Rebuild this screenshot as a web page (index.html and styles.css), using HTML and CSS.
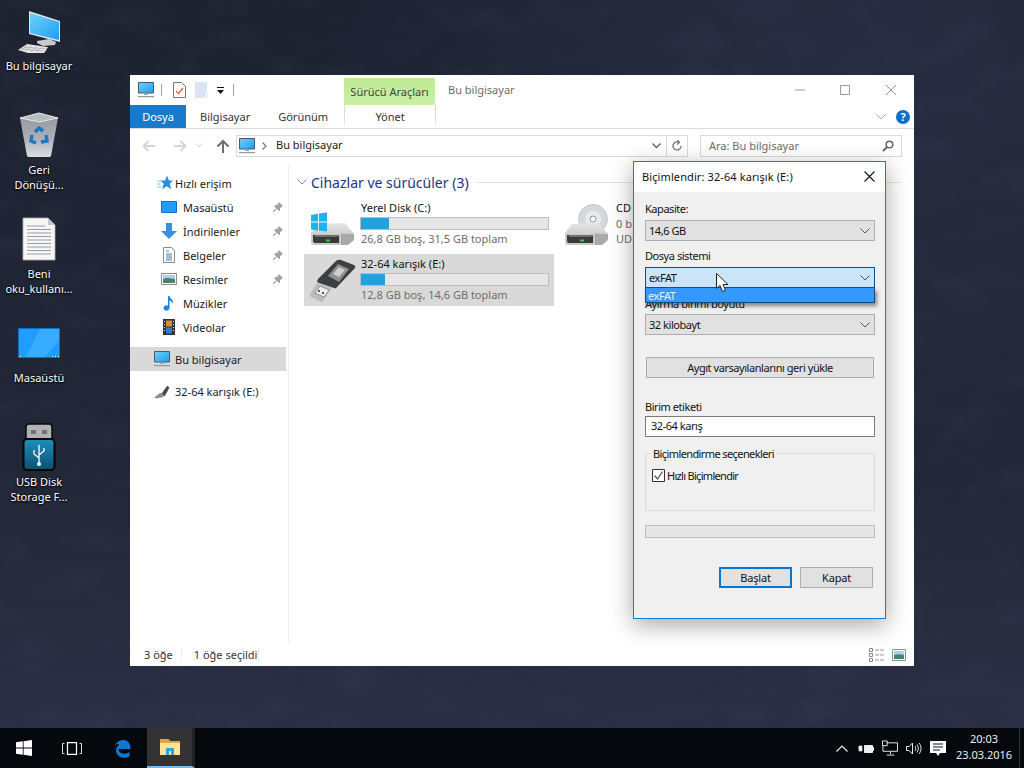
FILE: index.html
```html
<!DOCTYPE html>
<html lang="tr">
<head>
    <meta charset="UTF-8">
    <title>Bu bilgisayar</title>
    <link rel="stylesheet" href="styles.css">
</head>
<body>
    <!-- wallpaper mottling -->
    <svg class="wallpaper" width="1024" height="768">
        <filter id="mottle">
            <feTurbulence type="fractalNoise" baseFrequency=".015 .03" numOctaves="5" seed="7"/>
            <feColorMatrix values="0 0 0 0 .5  0 0 0 0 .55  0 0 0 0 .7  1.600 0 0 0 -.72"/>
        </filter>
        <rect width="1024" height="768" filter="url(#mottle)" opacity=".05"/>
    </svg>

    <!-- shared icons -->
    <svg class="sprite" width="0" height="0">
        <defs>
            <linearGradient id="screenBlue" x1="0" y1="0" x2="1" y2="1">
                <stop offset="0" stop-color="#6fd0fb"/><stop offset="1" stop-color="#1f9fee"/>
            </linearGradient>
            <linearGradient id="diskTop" x1="0" y1="0" x2="0" y2="1">
                <stop offset="0" stop-color="#e6e6e6"/><stop offset="1" stop-color="#cfcfcf"/>
            </linearGradient>
            <linearGradient id="binBody" x1="0" y1="0" x2="0" y2="1">
                <stop offset="0" stop-color="#8f959c"/><stop offset=".6" stop-color="#aeb2b8"/><stop offset="1" stop-color="#dcdee0"/>
            </linearGradient>
            <linearGradient id="usbBody" x1="0" y1="0" x2="0" y2="1">
                <stop offset="0" stop-color="#1d90bb"/><stop offset="1" stop-color="#0c4f70"/>
            </linearGradient>
            <symbol id="i-monitor" viewBox="0 0 16 16">
                <path d="M.5.5h15v10.500H.5z" fill="url(#screenBlue)" stroke="#4b5a66"/>
                <path d="M6 11h4v2H6z" fill="#9aa3aa"/>
                <path d="M0 14h16v1.200H0z" fill="#8d99a3"/>
            </symbol>
            <symbol id="i-pin" viewBox="0 0 12 12">
                <path d="M7 1l4 4-1.200.6L8 7.500 8 9.500 6.800 10 2.300 5.400l.6-1.100 2-.2L6.600 2z" fill="#a3a3a3"/>
                <path d="M4 8L1.200 10.800" stroke="#a3a3a3" stroke-width="1.200"/>
            </symbol>
            <symbol id="i-disk" viewBox="0 0 48 48">
                <path d="M9 24l27-1 9 11-43-1z" fill="url(#diskTop)"/>
                <path d="M2 33l30 .5V45H5q-3 0-3-3z" fill="#c9c9c9"/>
                <path d="M32 33.500L45 34v5q0 1-1 2l-5 4h-7z" fill="#a9a9a9"/>
                <path d="M4 35l26 .5V43H6q-2 0-2-2z" fill="#3a3a3a"/>
                <path d="M6 35h22v2H6z" fill="#707070"/>
                <path d="M17 39.500h4v2h-4z" fill="#35d04a"/>
            </symbol>
            <symbol id="i-usb" viewBox="0 0 14 14">
                <path d="M6.500 9.500L11.500 2.500l2 1.500-4 7.500z" fill="#4a4a4a"/>
                <path d="M5.500 8.500l3.500 2.500-1.500 1.500-6 1-1-1z" fill="#8c8c8c"/>
            </symbol>
        </defs>
    </svg>

    <!-- desktop icons -->
    <ul class="desktop-icons">
        <li class="desk-item">
            <svg class="desk-icon" viewBox="0 0 48 48">
                <path d="M14 3l31 10v21L14 26z" fill="#dfe6ec"/>
                <path d="M15 5l29 9v18L15 25z" fill="url(#screenBlue)"/>
                <path d="M22 33l12-2 7 3-1 3-12 1-6-3z" fill="#c7c9cb"/>
                <path d="M3 42l9-6 20 3 1 0-3 5-1 1H13z" fill="#e8e8e8"/>
                <path d="M6 42l7-4.500M10 43l7-5M15 44l7-5M21 44l6-5M6 41l23 2M9 39l23 2" stroke="#9c9c9c" stroke-width=".6"/>
            </svg>
            <span>Bu bilgisayar</span>
        </li>
        <li class="desk-item">
            <svg class="desk-icon" viewBox="0 0 48 48">
                <path d="M5 6l19-5 19 5-7 38a4 4 0 0 1-2 1H14a4 4 0 0 1-2-1z" fill="url(#binBody)"/>
                <path d="M5 6l19-5 19 5-19 4z" fill="#b8bcc0" stroke="#e4e6e8" stroke-width="1"/>
                <path d="M20 20l4-4 4 3M31 23l1 6-6 1M21 31l-5-2 1-6" fill="none" stroke="#1b78c8" stroke-width="3.500"/>
            </svg>
            <span>Geri<br>Dönüşü...</span>
        </li>
        <li class="desk-item">
            <svg class="desk-icon" viewBox="0 0 48 48">
                <path d="M8 2h25l7 7v35H8z" fill="#f6f6f6" stroke="#a9acb0" stroke-width=".8"/>
                <path d="M33 2v7h7z" fill="#c4c7ca"/>
                <path d="M12 10h18M12 13.500h24M12 17h24M12 20.500h24M12 24h24M12 27.500h24M12 31h24M12 34.500h24M12 38h24" stroke="#9b9ea2" stroke-width="1"/>
            </svg>
            <span>Beni<br>oku_kullanı...</span>
        </li>
        <li class="desk-item">
            <svg class="desk-icon" viewBox="0 0 48 48">
                <path d="M3.500 8.500h41v29h-41z" fill="#1f9eff" stroke="#0f6fc6"/>
                <path d="M25 9h19v12L30 37H11z" fill="#38adff"/>
                <path d="M5 36h1v1H5zM37 36h1v1h-1zM40 36h1v1h-1zM43 36h1v1h-1z" fill="#fff"/>
            </svg>
            <span>Masaüstü</span>
        </li>
        <li class="desk-item">
            <svg class="desk-icon" viewBox="0 0 48 48">
                <path d="M11 3a3 3 0 0 1 3-3h20a3 3 0 0 1 3 3v15H11z" fill="#b0b2b3" stroke="#0a0a0a" stroke-width="1.500"/>
                <path d="M16 6h5v4h-5zM27 6h5v4h-5z" fill="#6f7172"/>
                <rect x="8.500" y="15" width="31" height="31" rx="3.500" fill="url(#usbBody)" stroke="#050505" stroke-width="2"/>
                <path d="M24 21v18M24 34l-5-4v-4M24 31l5-4v-3" fill="none" stroke="#fff" stroke-width="1.300"/>
                <circle cx="24" cy="40" r="2" fill="#fff"/>
            </svg>
            <span>USB Disk<br>Storage F...</span>
        </li>
    </ul>

    <!-- explorer window -->
    <section class="explorer">
        <header class="titlebar">
            <div class="qat">
                <svg class="ico16"><use href="#i-monitor"/></svg>
                <i class="qat-sep"></i>
                <svg class="qat-doc" viewBox="0 0 13 16">
                    <path d="M.5.500h8l4 4v11H.5z" fill="#fff" stroke="#777"/>
                    <path d="M3 9l2.500 2.500L10 6" fill="none" stroke="#e8622a" stroke-width="1.300"/>
                </svg>
                <svg class="qat-doc" viewBox="0 0 13 16">
                    <path d="M0 0h12v16H0z" fill="#dbe4f2"/>
                    <path d="M10 11h3v5h-3z" fill="#eef2f8"/>
                </svg>
                <svg class="qat-drop" viewBox="0 0 7 7"><path d="M0 0h7v1H0zM0 3h7L3.500 7z" fill="#111"/></svg>
                <i class="qat-sep"></i>
            </div>
            <div class="tool-tab">Sürücü Araçları</div>
            <div class="win-title">Bu bilgisayar</div>
            <div class="win-controls">
                <svg viewBox="0 0 10 10"><path d="M0 5h10" stroke="#999"/></svg>
                <svg viewBox="0 0 10 10"><path d="M.5.500h9v9h-9z" fill="none" stroke="#999"/></svg>
                <svg class="win-close" viewBox="0 0 10 10"><path d="M0 0l10 10M10 0L0 10" stroke="#999"/></svg>
            </div>
        </header>

        <nav class="ribbon">
            <a class="tab tab-file">Dosya</a>
            <a class="tab tab-computer">Bilgisayar</a>
            <a class="tab tab-view">Görünüm</a>
            <a class="tab tab-manage">Yönet</a>
            <svg class="ribbon-chev" viewBox="0 0 10 6"><path d="M.5.500L5 5 9.500.5" fill="none" stroke="#a8a8a8"/></svg>
            <span class="help">?</span>
        </nav>

        <div class="addressrow">
            <svg class="nav-btn" viewBox="0 0 14 12"><path d="M13 6H2M6.500 1L1.500 6l5 5" fill="none" stroke="#d4d4d4" stroke-width="1.800"/></svg>
            <svg class="nav-btn" viewBox="0 0 14 12"><path d="M1 6h11M7.500 1l5 5-5 5" fill="none" stroke="#d4d4d4" stroke-width="1.800"/></svg>
            <svg class="nav-down" viewBox="0 0 8 5"><path d="M.5.500L4 4 7.500.5" fill="none" stroke="#d4d4d4"/></svg>
            <svg class="nav-up" viewBox="0 0 14 14"><path d="M7 14V2M1.500 7.500L7 2l5.500 5.500" fill="none" stroke="#6e6e6e" stroke-width="2"/></svg>
            <div class="addressbar">
                <svg class="ico16"><use href="#i-monitor"/></svg>
                <svg class="crumb" viewBox="0 0 5 8"><path d="M.5.500L4 4 .5 7.500" fill="none" stroke="#777" stroke-width="1.200"/></svg>
                <span class="crumb-text">Bu bilgisayar</span>
                <svg class="addr-chev" viewBox="0 0 9 6"><path d="M.5.500L4.500 4.500 8.500.5" fill="none" stroke="#666" stroke-width="1.400"/></svg>
                <span class="addr-refresh">
                    <svg viewBox="0 0 12 12"><path d="M10 6a4 4 0 1 1-2-3.500M6.500 0l2 2.500L6 4.500" fill="none" stroke="#777" stroke-width="1.300"/></svg>
                </span>
            </div>
            <div class="searchbox">
                <span>Ara: Bu bilgisayar</span>
                <svg viewBox="0 0 12 12"><circle cx="7.500" cy="4.500" r="3.300" fill="none" stroke="#666" stroke-width="1.500"/><path d="M5 7l-4 4" stroke="#666" stroke-width="2"/></svg>
            </div>
        </div>

        <div class="main">
            <aside class="sidebar">
                <div class="side-row side-head">
                    <svg class="side-icon" viewBox="0 0 16 16"><path d="M10 .5l2 5h4l-3.200 3.200 1.400 5.500-4.500-3-4.500 3 1.500-5.500L3.500 5.500h4.500z" fill="#2a8fe0"/><path d="M0 6h4M0 9h3M0 12h4" stroke="#8cc4ee"/></svg>
                    <span>Hızlı erişim</span>
                </div>
                <div class="side-row side-sub">
                    <svg class="side-icon" viewBox="0 0 16 16"><path d="M.5 2.500h15v11H.5z" fill="#1f9eff" stroke="#0f6fc6"/></svg>
                    <span>Masaüstü</span>
                    <svg class="pin"><use href="#i-pin"/></svg>
                </div>
                <div class="side-row side-sub">
                    <svg class="side-icon" viewBox="0 0 16 16"><path d="M5 0h6v8h5l-8 8-8-8h5z" fill="#3a8ede"/></svg>
                    <span>İndirilenler</span>
                    <svg class="pin"><use href="#i-pin"/></svg>
                </div>
                <div class="side-row side-sub">
                    <svg class="side-icon" viewBox="0 0 16 16"><path d="M2.500.5h8l3 3v12h-11z" fill="#fff" stroke="#888"/><path d="M5 4h3M5 7h6M5 9h6M5 11h6M5 13h6" stroke="#3f82b8"/></svg>
                    <span>Belgeler</span>
                    <svg class="pin"><use href="#i-pin"/></svg>
                </div>
                <div class="side-row side-sub">
                    <svg class="side-icon" viewBox="0 0 16 16"><path d="M.5 2.500h15v11H.5z" fill="#fff" stroke="#8a8a8a"/><path d="M2 4h12v4H2z" fill="#a9d3ea"/><path d="M2 8c4-2 8 0 12 0v4H2z" fill="#4d7f6a"/></svg>
                    <span>Resimler</span>
                    <svg class="pin"><use href="#i-pin"/></svg>
                </div>
                <div class="side-row side-sub">
                    <svg class="side-icon" viewBox="0 0 16 16"><path d="M7 1h1.500c.5 3 4.500 3.500 3.500 8-.5-2-2-3-3.500-3.500V13a3 2.700 0 1 1-1.500-2.300z" fill="#1c86e0"/></svg>
                    <span>Müzikler</span>
                </div>
                <div class="side-row side-sub">
                    <svg class="side-icon" viewBox="0 0 16 16"><path d="M2 0h12v16H2z" fill="#333"/><path d="M5 1.500h6V7.500H5z" fill="#d98c2b"/><path d="M5 8.500h6v6H5z" fill="#2f7fd0"/><path d="M3 2h1v1H3zM3 5h1v1H3zM3 8h1v1H3zM3 11h1v1H3zM12 2h1v1h-1zM12 5h1v1h-1zM12 8h1v1h-1zM12 11h1v1h-1z" fill="#ddd"/></svg>
                    <span>Videolar</span>
                </div>
                <div class="side-row side-head side-pc">
                    <svg class="side-icon"><use href="#i-monitor"/></svg>
                    <span>Bu bilgisayar</span>
                </div>
                <div class="side-row side-head side-drive">
                    <svg class="side-icon"><use href="#i-usb"/></svg>
                    <span>32-64 karışık (E:)</span>
                </div>
            </aside>

            <div class="content">
                <div class="group-head">
                    <svg viewBox="0 0 10 6"><path d="M.5.500L5 5 9.500.5" fill="none" stroke="#8a8a8a"/></svg>
                    <span>Cihazlar ve sürücüler (3)</span>
                    <i></i>
                </div>
                <div class="drives">
                    <div class="drive">
                        <svg class="drive-icon" viewBox="0 0 48 48">
                            <use href="#i-disk"/>
                            <path d="M2 15l7-1.200V21.500H2zM10 13.600L18 12.500v9h-8zM2 22.500h7v8l-7-1zM10 22.500h8v9l-8-1z" fill="#19b5f1"/>
                        </svg>
                        <div class="drive-info">
                            <div class="drive-name">Yerel Disk (C:)</div>
                            <div class="bar"><div class="bar-fill" style="width:15%"></div></div>
                            <div class="drive-sub">26,8 GB boş, 31,5 GB toplam</div>
                        </div>
                    </div>
                    <div class="drive drive-optical">
                        <svg class="drive-icon" viewBox="0 0 48 48">
                            <circle cx="28" cy="19" r="14.500" fill="#d5d7da" stroke="#b0b2b6" stroke-width=".6"/>
                            <circle cx="28" cy="19" r="8" fill="#e8eaec"/>
                            <circle cx="28" cy="19" r="3" fill="#fff" stroke="#9a9a9e"/>
                            <use href="#i-disk" x="-2"/>
                        </svg>
                        <div class="drive-info">
                            <div class="drive-name">CD</div>
                            <div class="drive-cd">0 b</div>
                            <div class="drive-sub">UDF</div>
                        </div>
                    </div>
                    <div class="drive drive-selected">
                        <svg class="drive-icon" viewBox="0 0 48 48">
                            <path d="M8 27L1 38q-1 2 1 3l10 5q1 .5 2-1l9-13z" fill="#bdbdbd"/>
                            <path d="M6 37l5-7 9 4-5 7z" fill="#eee" stroke="#666" stroke-width=".6"/>
                            <path d="M9 34h2v2H9zM13 36h2v2h-2z" fill="#555"/>
                            <path d="M27 5q2-2 5-1l13 5q2 1 1 3L28 31q-1 2-3 1L10 27q-3-1-1-4z" fill="#3d3e40"/>
                            <path d="M19 20L29 8l11 5-10 13z" fill="#8f9091"/>
                            <path d="M24 18l6-7 6 3-6 7z" fill="#cfcfcf"/>
                        </svg>
                        <div class="drive-info">
                            <div class="drive-name">32-64 karışık (E:)</div>
                            <div class="bar"><div class="bar-fill" style="width:13%"></div></div>
                            <div class="drive-sub">12,8 GB boş, 14,6 GB toplam</div>
                        </div>
                    </div>
                </div>
            </div>
        </div>

        <footer class="statusbar">
            <span class="status-count">3 öğe</span>
            <i class="status-sep"></i>
            <span>1 öğe seçildi</span>
            <i class="status-sep status-sep-last"></i>
            <svg class="view-details" viewBox="0 0 16 14"><path d="M.5.500h3v3h-3zM.5 5.500h3v3h-3zM.5 10.500h3v3h-3z" fill="none" stroke="#888"/><path d="M6 2h10M6 7h10M6 12h10" stroke="#999" stroke-dasharray="4 1"/></svg>
            <svg class="view-tiles" viewBox="0 0 14 12"><path d="M.5.500h13v11H.5z" fill="#fff" stroke="#7f93a8"/><path d="M2 2h10v4H2z" fill="#a9d3ea"/><path d="M2 6c3-1 7-1 10 0v4H2z" fill="#4d7f6a"/></svg>
        </footer>
    </section>

    <!-- format dialog -->
    <section class="dialog">
        <header class="dialog-title">
            <span>Biçimlendir: 32-64 karışık (E:)</span>
            <svg viewBox="0 0 11 11"><path d="M.5.500l10 10M10.500.5l-10 10" stroke="#111" stroke-width="1.100"/></svg>
        </header>
        <div class="dialog-body">
            <label class="field-label">Kapasite:</label>
            <div class="combo">
                <span>14,6 GB</span>
                <svg viewBox="0 0 10 6"><path d="M.5.500L5 5 9.500.5" fill="none" stroke="#555"/></svg>
            </div>
            <label class="field-label">Dosya sistemi</label>
            <div class="combo combo-open">
                <span>exFAT</span>
                <svg viewBox="0 0 10 6"><path d="M.5.500L5 5 9.500.5" fill="none" stroke="#555"/></svg>
                <div class="combo-list">exFAT</div>
            </div>
            <label class="field-label label-tight">Ayırma birimi boyutu</label>
            <div class="combo">
                <span>32 kilobayt</span>
                <svg viewBox="0 0 10 6"><path d="M.5.500L5 5 9.500.5" fill="none" stroke="#555"/></svg>
            </div>
            <button class="btn btn-wide">Aygıt varsayılanlarını geri yükle</button>
            <label class="field-label label-volume">Birim etiketi</label>
            <div class="textbox">32-64 karış</div>
            <fieldset class="options">
                <legend>Biçimlendirme seçenekleri</legend>
                <div class="check-row">
                    <svg class="check" viewBox="0 0 13 13"><path d="M.5.500h12v12H.5z" fill="#fff" stroke="#333"/><path d="M2.500 6.500l3 3.500 5-7.500" fill="none" stroke="#555" stroke-width="1.300"/></svg>
                    <span>Hızlı Biçimlendir</span>
                </div>
            </fieldset>
            <div class="progress"></div>
            <div class="dialog-actions">
                <button class="btn btn-primary">Başlat</button>
                <button class="btn">Kapat</button>
            </div>
        </div>
    </section>

    <svg class="cursor" viewBox="0 0 13 19"><path d="M.5.500v15l3.500-3 2.500 6 3-1.200-2.500-5.800h5z" fill="#fff" stroke="#222"/></svg>

    <!-- taskbar -->
    <footer class="taskbar">
        <div class="task-btn task-start">
            <svg viewBox="0 0 16 16"><path d="M0 2.300L6.800 1.300V7.600H0zM7.600 1.200L16 0V7.600H7.600zM0 8.400H6.800V14.700L0 13.700zM7.600 8.400H16V16L7.600 14.800z" fill="#fff"/></svg>
        </div>
        <div class="task-btn task-view">
            <svg viewBox="0 0 20 13"><path d="M5.500.7h9v11.600h-9z" fill="none" stroke="#fff" stroke-width="1.200"/><path d="M2.500 1.500H.5v10h2M17.500 1.500h2v10h-2" fill="none" stroke="#ddd"/></svg>
        </div>
        <div class="task-btn task-edge">
            <svg viewBox="0 0 20 19"><path d="M2 10C3 4 7 1 11 1c5 0 8 4 7.500 9H6.500c0 5 7 6 11 3v4.500c-6 3-14 .5-13.500-6.500 0-2 1-4 3-5C5 3.500 3 6 2 10z" fill="#0f78d4"/><path d="M7 8h7c0-4-6-4-7 0z" fill="#0f78d4"/></svg>
        </div>
        <div class="task-btn task-explorer">
            <svg viewBox="0 0 22 18"><path d="M1 1h8l2 2h10v14H1z" fill="#f7d774"/><path d="M1 5h20v12H1z" fill="#fce49a"/><path d="M1 1h8l2 2h10v2H1z" fill="#d9a93a"/><path d="M7 17v-6a1 1 0 0 1 1-1h6a1 1 0 0 1 1 1v6h-3v-4h-2v4z" fill="#23a8e0"/></svg>
        </div>
        <div class="tray">
            <svg class="tray-chev" viewBox="0 0 12 7"><path d="M.5 6.500L6 1l5.500 5.500" fill="none" stroke="#eee" stroke-width="1.200"/></svg>
            <svg class="tray-power" viewBox="0 0 16 11"><path d="M6.500 2.500h8v7h-8z" fill="#eee" stroke="#eee"/><path d="M15 4.500h1v3h-1zM0 5h3M1 3v5h3V3z" fill="#eee" stroke="#eee" stroke-width=".7"/></svg>
            <svg class="tray-net" viewBox="0 0 17 16"><path d="M5 2.500h11.500v9H1" fill="none" stroke="#eee"/><path d="M.5.500h5v5h-5zM1 5.500v6M9 11.500v3M5 15.500h8" fill="none" stroke="#eee"/></svg>
            <svg class="tray-sound" viewBox="0 0 16 13"><path d="M.5 4.500h2.500L6.500 1v11L3 8.500H.5z" fill="none" stroke="#eee"/><path d="M9 4c1 1.500 1 3.500 0 5M11 2.500c1.800 2.500 1.800 5.500 0 8M13 1c2.700 3.500 2.700 7.500 0 11" fill="none" stroke="#eee"/></svg>
            <svg class="tray-note" viewBox="0 0 16 15"><path d="M0 0h16v12h-6l-2 3-2-3H0z" fill="#fff"/><path d="M3 3h10M3 6h10M3 9h7" stroke="#10141a" stroke-width="1.100"/></svg>
            <div class="clock"><span>20:03</span><span>23.03.2016</span></div>
            <i class="show-desktop"></i>
        </div>
    </footer>
</body>
</html>
```
FILE: styles.css
```css
/* Base */
html, body {
    margin: 0;
    height: 768px;
    overflow: hidden;
}
body {
    position: relative;
    font-family: "Noto Sans", "Open Sans", sans-serif;
    font-size: 11px;
    color: #1a1a1a;
    background-color: #212636;
    background-image:
        radial-gradient(ellipse at 85% 10%, #272c40 0, transparent 45%),
        linear-gradient(180deg, #1e2332 0, #222737 60%, #2b3045 100%);
}
.sprite, .wallpaper {
    position: absolute;
    left: 0;
    top: 0;
}
svg {
    display: block;
    flex: none;
}
i {
    display: block;
}

/* Desktop icons */
.desktop-icons {
    position: absolute;
    left: 1px;
    top: 6px;
    width: 76px;
    margin: 0;
    padding: 0;
    list-style: none;
}
.desk-item {
    height: 104px;
    box-sizing: border-box;
    padding-top: 2px;
    display: flex;
    flex-direction: column;
    align-items: center;
    color: #fff;
    text-align: center;
    line-height: 15px;
    text-shadow: 0 1px 2px #000, 0 0 2px #000;
}
.desk-icon {
    width: 48px;
    height: 48px;
    margin-bottom: 2px;
    overflow: visible;
}

/* Explorer window */
.explorer {
    position: absolute;
    left: 130px;
    top: 75px;
    width: 784px;
    height: 591px;
    background: #fff;
    display: flex;
    flex-direction: column;
}
.titlebar {
    height: 30px;
    display: flex;
}
.qat {
    width: 214px;
    padding-left: 8px;
    box-sizing: border-box;
    display: flex;
    align-items: center;
}
.ico16 {
    width: 16px;
    height: 16px;
}
.qat-sep {
    width: 1px;
    height: 12px;
    background: #a0a0a0;
    margin: 0 11px 0 7px;
}
.qat-doc {
    width: 13px;
    height: 16px;
    margin-right: 9px;
}
.qat-drop {
    width: 7px;
    height: 7px;
    margin-right: 2px;
}
.tool-tab {
    margin-top: 3px;
    width: 91px;
    background: linear-gradient(180deg, #bdea92, #c9efa5);
    text-align: center;
    line-height: 27px;
    color: #444;
}
.win-title {
    margin-left: 13px;
    line-height: 30px;
    color: #6d6d6d;
}
.win-controls {
    margin-left: auto;
    display: flex;
    align-items: center;
    gap: 35px;
    padding-right: 18px;
}
.win-controls svg {
    width: 10px;
    height: 10px;
}
.win-controls .win-close {
    margin-left: 1px;
}
.ribbon {
    height: 23px;
    border-bottom: 1px solid #dadbdc;
    display: flex;
    align-items: center;
}
.tab {
    line-height: 23px;
    color: #333;
}
.tab-file {
    width: 56px;
    text-align: center;
    background: #1979ca;
    color: #fff;
}
.tab-computer {
    margin-left: 14px;
}
.tab-view {
    margin-left: 28px;
}
.tab-manage {
    margin-left: 16px;
    width: 92px;
    height: 23px;
    box-sizing: border-box;
    padding-top: 3px;
    text-align: center;
    line-height: 17px;
    border-style: solid;
    border-width: 0 1px;
    border-image: linear-gradient(180deg, #d8d9da 60%, transparent) 1;
}
.ribbon-chev {
    width: 10px;
    height: 6px;
    margin-left: auto;
}
.help {
    width: 14px;
    height: 14px;
    margin: 0 4px 0 10px;
    border-radius: 50%;
    background: #0a6ec4;
    color: #fff;
    font-weight: bold;
    font-size: 11px;
    line-height: 14px;
    text-align: center;
}
.addressrow {
    height: 36px;
    box-sizing: border-box;
    display: flex;
    align-items: center;
    padding: 5px 12px 8px;
}
.nav-btn {
    width: 14px;
    height: 12px;
    margin-right: 17px;
}
.nav-down {
    width: 8px;
    height: 5px;
    margin: 0 13px 0 -9px;
}
.nav-up {
    width: 14px;
    height: 14px;
    margin-right: 6px;
}
.addressbar {
    width: 452px;
    height: 22px;
    box-sizing: border-box;
    border: 1px solid #d9d9d9;
    display: flex;
    align-items: center;
    padding-left: 2px;
}
.crumb {
    width: 5px;
    height: 8px;
    margin: 0 9px 0 7px;
}
.crumb-text {
    margin-bottom: 2px;
}
.addr-chev {
    width: 9px;
    height: 6px;
    margin-left: auto;
    margin-right: 5px;
}
.addr-refresh {
    width: 20px;
    height: 20px;
    border-left: 1px solid #d9d9d9;
    display: flex;
    align-items: center;
    justify-content: center;
}
.addr-refresh svg {
    width: 12px;
    height: 12px;
}
.searchbox {
    width: 202px;
    height: 22px;
    box-sizing: border-box;
    margin-left: auto;
    border: 1px solid #d9d9d9;
    display: flex;
    align-items: center;
    justify-content: space-between;
    padding: 0 7px 0 8px;
    color: #6d6d6d;
}
.searchbox svg {
    width: 12px;
    height: 12px;
}

/* Main area */
.main {
    flex: 1;
    min-height: 0;
    display: flex;
}
.sidebar {
    width: 156px;
    padding: 6px 2px 0 0;
    border-right: 1px solid #f0f0f0;
}
.side-row {
    height: 24px;
    display: flex;
    align-items: center;
    color: #1a1a1a;
}
.side-icon {
    width: 16px;
    height: 16px;
}
.side-head {
    padding-left: 27px;
}
.side-head span {
    margin-left: 2px;
}
.side-sub {
    padding-left: 31px;
}
.side-sub span {
    margin-left: 6px;
}
.pin {
    width: 12px;
    height: 12px;
    margin-left: auto;
    margin-right: 2px;
}
.side-pc {
    margin-top: 8px;
    background: #d9d9d9;
    padding-left: 24px;
}
.side-pc span, .side-drive span {
    margin-left: 5px;
}
.side-drive {
    margin-top: 8px;
    padding-left: 24px;
}
.content {
    flex: 1;
    padding: 5px 14px 0 8px;
    min-width: 0;
}
.group-head {
    height: 24px;
    display: flex;
    align-items: center;
    color: #1e3287;
    font-size: 14px;
}
.group-head svg {
    width: 10px;
    height: 6px;
    margin-right: 4px;
}
.group-head i {
    flex: 1;
    height: 1px;
    margin-left: 7px;
    background: #e2e2e2;
}
.drives {
    margin: 4px 0 0 7px;
    display: grid;
    grid-template-columns: 250px 250px;
    grid-auto-rows: 52px;
    gap: 4px 6px;
}
.drive {
    display: flex;
    padding-left: 5px;
    min-width: 0;
}
.drive-selected {
    background: #d9d9d9;
}
.drive-icon {
    width: 48px;
    height: 48px;
    margin-top: 2px;
}
.drive-info {
    margin-left: 3px;
    padding-top: 3px;
    width: 189px;
    flex: none;
    white-space: nowrap;
}
.drive-optical .drive-info {
    margin-left: 2px;
    width: 18px;
    overflow: hidden;
}
.drive-name {
    line-height: 14px;
    margin-bottom: 2px;
    padding-left: 1px;
    color: #111;
}
.bar {
    height: 13px;
    box-sizing: border-box;
    border: 1px solid #bcbcbc;
    background: #e6e6e6;
}
.bar-fill {
    height: 100%;
    background: #26a0da;
}
.drive-sub {
    line-height: 18px;
    padding-left: 1px;
    color: #6d6d6d;
}
.drive-cd {
    line-height: 13px;
    padding-left: 1px;
    color: #6d6d6d;
}
.statusbar {
    height: 22px;
    box-sizing: border-box;
    padding: 0 8px 1px 14px;
    display: flex;
    align-items: center;
    color: #333;
}
.status-sep {
    width: 1px;
    height: 14px;
    background: #f0f0f0;
    margin: 0 12px 0 8px;
}
.status-sep-last {
    margin-left: 1px;
}
.view-details {
    width: 16px;
    height: 14px;
    margin-left: auto;
    margin-right: 7px;
}
.view-tiles {
    width: 14px;
    height: 12px;
}

/* Format dialog */
.dialog {
    position: absolute;
    left: 633px;
    top: 161px;
    width: 253px;
    height: 458px;
    box-sizing: border-box;
    border: 1px solid #0f7fd0;
    background: #f0f0f0;
    box-shadow: 0 6px 22px rgba(0, 0, 0, .35);
}
.dialog-title {
    height: 30px;
    box-sizing: border-box;
    background: #fff;
    display: flex;
    align-items: center;
    justify-content: space-between;
    padding: 0 10px 1px 8px;
    color: #111;
    letter-spacing: .1px;
}
.dialog-title svg {
    width: 11px;
    height: 11px;
}
.dialog-body {
    padding: 9px 10px 0 11px;
    letter-spacing: -.45px;
}
.field-label {
    display: block;
    line-height: 16px;
    margin-bottom: 3px;
    color: #111;
}
.label-tight {
    margin-top: 8px;
    margin-bottom: 2px;
}
.combo {
    position: relative;
    height: 21px;
    box-sizing: border-box;
    margin-bottom: 7px;
    border: 1px solid #adadad;
    background: #e1e1e1;
    display: flex;
    align-items: center;
    justify-content: space-between;
    padding: 0 4px 0 3px;
    color: #111;
}
.combo svg {
    width: 10px;
    height: 6px;
}
.combo-open {
    margin-bottom: 0;
    background: #cce4f7;
    border-color: #005499;
}
.combo-list {
    position: absolute;
    left: -1px;
    right: -1px;
    top: 20px;
    height: 15px;
    box-sizing: border-box;
    background: #3399ff;
    border: 1px solid #0f4a80;
    border-top: 0;
    padding-left: 2px;
    line-height: 15px;
    color: #e8f3ff;
    box-shadow: 2px 3px 4px rgba(0, 0, 0, .45);
}
.btn {
    height: 21px;
    box-sizing: border-box;
    border: 1px solid #adadad;
    background: #e1e1e1;
    font-family: inherit;
    font-size: 11px;
    color: #111;
    padding: 0;
    display: block;
    letter-spacing: -.2px;
}
.btn-wide {
    width: 228px;
    margin: 22px 0 21px 1px;
    letter-spacing: -.45px;
}
.label-volume {
    margin-bottom: 1px;
}
.textbox {
    height: 21px;
    box-sizing: border-box;
    border: 1px solid #7a7a7a;
    background: #fff;
    padding-left: 5px;
    line-height: 18px;
    color: #111;
}
.options {
    margin: 9px 0 0;
    padding: 7px 0 0 6px;
    height: 65px;
    box-sizing: border-box;
    border: 1px solid #dcdcdc;
    min-width: 0;
}
.options legend {
    padding: 0 2px;
    margin-left: -1px;
    line-height: 15px;
    color: #111;
    letter-spacing: -.6px;
}
.check-row {
    display: flex;
    align-items: center;
    gap: 2px;
    color: #111;
    letter-spacing: -.7px;
}
.check {
    width: 13px;
    height: 13px;
}
.progress {
    height: 13px;
    margin-top: 14px;
    box-sizing: border-box;
    border: 1px solid #bcbcbc;
    background: #e6e6e6;
}
.dialog-actions {
    margin-top: 29px;
    display: flex;
    justify-content: flex-end;
    gap: 8px;
    padding-right: 2px;
}
.dialog-actions .btn {
    width: 73px;
}
.dialog-actions .btn-primary {
    border: 2px solid #0078d7;
}
.cursor {
    position: absolute;
    left: 716px;
    top: 273px;
    width: 13px;
    height: 19px;
}

/* Taskbar */
.taskbar {
    position: absolute;
    left: 0;
    right: 0;
    bottom: 0;
    height: 40px;
    background: #05080c;
    display: flex;
}
.task-btn {
    width: 48px;
    display: flex;
    align-items: center;
    justify-content: center;
}
.task-start svg {
    width: 16px;
    height: 16px;
}
.task-view {
    margin-right: 2px;
}
.task-view svg {
    width: 20px;
    height: 13px;
}
.task-edge svg {
    width: 20px;
    height: 19px;
}
.task-explorer {
    margin-left: 1px;
    background: #333;
    box-sizing: border-box;
    border-bottom: 2px solid #76b9ed;
    border-right: 3px solid #222;
}
.task-explorer svg {
    width: 22px;
    height: 18px;
}
.tray {
    margin-left: auto;
    display: flex;
    align-items: center;
    color: #f0f0f0;
}
.tray-chev {
    width: 12px;
    height: 7px;
    margin-right: 10px;
}
.tray-power {
    width: 16px;
    height: 11px;
    margin-right: 8px;
}
.tray-net {
    width: 16px;
    height: 16px;
    margin-right: 8px;
}
.tray-sound {
    width: 16px;
    height: 13px;
    margin-right: 8px;
}
.tray-note {
    width: 16px;
    height: 15px;
    margin-right: 3px;
}
.clock {
    width: 70px;
    margin-bottom: 2px;
    display: flex;
    flex-direction: column;
    align-items: center;
    line-height: 16px;
}
.show-desktop {
    width: 1px;
    height: 100%;
    background: #333;
    margin-right: 4px;
}
```
